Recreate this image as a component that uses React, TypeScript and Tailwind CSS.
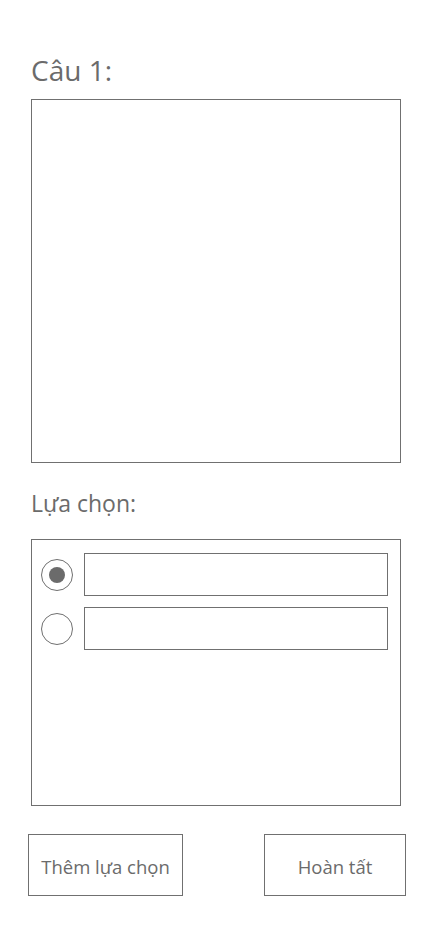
import { useState } from "react";

const options = [0, 1];

export default function App() {
  const [selected, setSelected] = useState(0);

  return (
    <div className="min-h-[926px] w-[428px] bg-white font-['Open_Sans',sans-serif] text-[#6b6b6b]">
      <div className="pl-[31px] pr-[27px] pt-[50px]">
        <h1 className="text-[28px] leading-[40px] font-normal">Câu 1:</h1>
        <div className="mt-[9px] h-[364px] w-[370px] border border-[#707070]" />

        <h2 className="mt-[24px] text-[23px] leading-[32px] font-normal">Lựa chọn:</h2>
        <div className="mt-[20px] flex h-[267px] w-[370px] flex-col gap-[11px] border border-[#707070] pl-[9px] pr-[12px] pt-[13px]">
          {options.map((i) => (
            <div key={i} className="flex items-center gap-[11px]">
              <button
                onClick={() => setSelected(i)}
                className="flex h-[32px] w-[32px] shrink-0 items-center justify-center rounded-full border border-[#707070]"
              >
                {selected === i && <span className="h-[16px] w-[16px] rounded-full bg-[#6b6b6b]" />}
              </button>
              <input className="h-[43px] w-[304px] border border-[#707070] outline-none" />
            </div>
          ))}
        </div>
      </div>

      <div className="mt-[28px] flex justify-between pl-[28px] pr-[22px]">
        <button className="h-[62px] w-[155px] border border-[#707070] pt-[3px] text-[18.5px]">Thêm lựa chọn</button>
        <button className="h-[62px] w-[142px] border border-[#707070] pt-[3px] text-[18.5px]">Hoàn tất</button>
      </div>
    </div>
  );
}
